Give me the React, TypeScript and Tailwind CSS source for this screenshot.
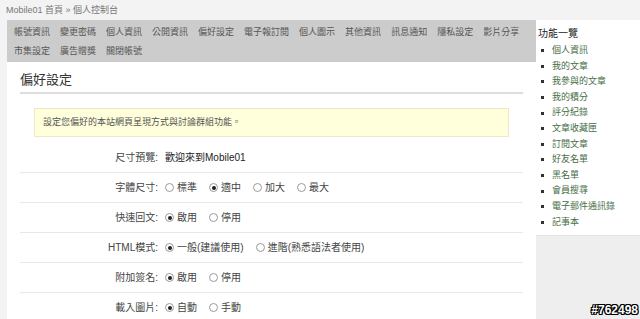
import React from "react";

const font = "font-['Liberation_Sans','Noto_Sans_CJK_TC',sans-serif]";

const navRows = [
  ["帳號資訊", "變更密碼", "個人資訊", "公開資訊", "偏好設定", "電子報訂閱", "個人圖示", "其他資訊", "訊息通知", "隱私設定", "影片分享"],
  ["市集設定", "廣告贈獎", "關閉帳號"],
];

const sideLinks = [
  "個人資訊", "我的文章", "我參與的文章", "我的積分", "評分紀錄", "文章收藏匣",
  "訂閱文章", "好友名單", "黑名單", "會員搜尋", "電子郵件通訊錄", "記事本",
];

function Radio({ checked, label }: { checked?: boolean; label: string }) {
  return (
    <span className="flex items-center mr-[12px]">
      <span className="w-[9px] h-[9px] rounded-full border border-[#9a9a9a] bg-white flex items-center justify-center mr-[3px]">
        {checked && <span className="w-[4px] h-[4px] rounded-full bg-[#222]" />}
      </span>
      <span>{label}</span>
    </span>
  );
}

function FormRow({ label, first, children }: { label: string; first?: boolean; children: React.ReactNode }) {
  return (
    <div className={`flex items-center h-[30px] ${first ? "" : "border-t border-[#e8e8e8]"}`}>
      <div className="w-[139px] text-right pr-[1px]">{label}</div>
      <div className="flex items-center pl-[6px]">{children}</div>
    </div>
  );
}

export default function App() {
  return (
    <div className={`relative w-[640px] h-[319px] overflow-hidden bg-[#f3f3f3] ${font}`}>
      {/* breadcrumb */}
      <div className="h-[20px] pl-[6px] pt-[3px] text-[9px] leading-[14px] text-[#777]">
        Mobile01 首頁 » 個人控制台
      </div>

      <div className="flex">
        {/* main column */}
        <div className="ml-[7px] w-[529px]">
          <div className="bg-[#cccccc] h-[42px] pt-[3px] pl-[7px] text-[9px] text-[#555]">
            {navRows.map((row, i) => (
              <div key={i} className="flex h-[19px] items-center gap-[10px]">
                {row.map((t) => (
                  <span key={t}>{t}</span>
                ))}
              </div>
            ))}
          </div>

          <div className="bg-white h-[257px] px-[13px] text-[10px] text-[#444]">
            <div className="pt-[8px] pb-[2px] text-[13px] leading-[20px] text-[#333] border-b-2 border-[#dddddd]">
              偏好設定
            </div>
            <div className="mx-[14px] mt-[14px] h-[29px] flex items-center pl-[8px] bg-[#ffffdc] border border-[#eee8c8] text-[9px] text-[#555]">
              設定您偏好的本站網頁呈現方式與討論群組功能。
            </div>

            <div className="mt-[5px]">
              <FormRow label="尺寸預覽:" first>
                <span className="text-[#222]">歡迎來到Mobile01</span>
              </FormRow>
              <FormRow label="字體尺寸:">
                <Radio label="標準" />
                <Radio label="適中" checked />
                <Radio label="加大" />
                <Radio label="最大" />
              </FormRow>
              <FormRow label="快速回文:">
                <Radio label="啟用" checked />
                <Radio label="停用" />
              </FormRow>
              <FormRow label="HTML模式:">
                <Radio label="一般(建議使用)" checked />
                <Radio label="進階(熟悉語法者使用)" />
              </FormRow>
              <FormRow label="附加簽名:">
                <Radio label="啟用" checked />
                <Radio label="停用" />
              </FormRow>
              <FormRow label="載入圖片:">
                <Radio label="自動" checked />
                <Radio label="手動" />
              </FormRow>
            </div>
          </div>
        </div>

        {/* sidebar */}
        <div className="w-[104px]">
          <div className="bg-white h-[215px] pl-[2px] pt-[7px]">
            <div className="text-[10px] leading-[14px] text-[#222]">功能一覽</div>
            <ul className="mt-[2px] text-[9px] text-[#466e46]">
              {sideLinks.map((l) => (
                <li key={l} className="flex items-center h-[15.6px]">
                  <span className="w-[3px] h-[3px] bg-[#333] ml-[3px] mr-[8px]" />
                  {l}
                </li>
              ))}
            </ul>
          </div>
          <div className="h-[90px] bg-[#eeeeee] border-t border-[#e4e4e4]" />
        </div>
      </div>

      {/* watermark */}
      <div className="absolute right-[2px] bottom-[3px] text-[12px] font-bold text-white leading-none font-['Liberation_Sans',sans-serif] [text-shadow:1px_0_0_#000,-1px_0_0_#000,0_1px_0_#000,0_-1px_0_#000,1px_1px_0_#000,-1px_-1px_0_#000,1px_-1px_0_#000,-1px_1px_0_#000]">
        #762498
      </div>
    </div>
  );
}
